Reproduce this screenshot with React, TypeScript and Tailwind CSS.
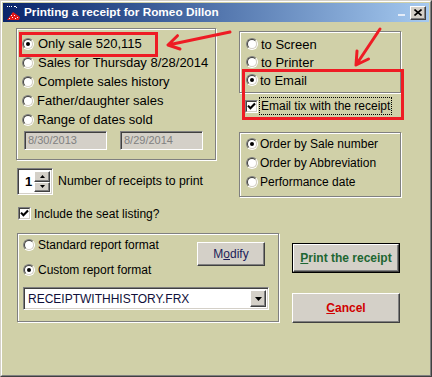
import React from "react";

const raised =
  "bg-[#d4d0c8] border border-t-white border-l-white border-b-[#404040] border-r-[#404040] shadow-[inset_-1px_-1px_0_#808080]";
const sunken =
  "border border-t-[#808080] border-l-[#808080] border-b-white border-r-white shadow-[inset_1px_1px_0_#404040,inset_-1px_-1px_0_#d4d0c8]";
const etched = "border border-[#808080] shadow-[inset_1px_1px_0_#fff,1px_1px_0_#fff]";

function Radio({ checked }: { checked?: boolean }) {
  return (
    <span className="relative block w-[12px] h-[12px] shrink-0 rounded-full border border-t-[#808080] border-l-[#808080] border-b-white border-r-white">
      <span className="absolute inset-0 rounded-full border border-t-[#404040] border-l-[#404040] border-b-[#d4d0c8] border-r-[#d4d0c8] bg-white flex items-center justify-center">
        {checked && <span className="block w-[4px] h-[4px] rounded-full bg-black" />}
      </span>
    </span>
  );
}

function Check() {
  return (
    <span className="relative block w-[13px] h-[13px] shrink-0 border border-t-[#808080] border-l-[#808080] border-b-white border-r-white">
      <span className="absolute inset-0 border border-t-[#404040] border-l-[#404040] border-b-[#d4d0c8] border-r-[#d4d0c8] bg-white">
        <svg width="9" height="9" viewBox="0 0 9 9" className="block">
          <path d="M1 3.6 L3.4 6.2 L8 1.4" stroke="#000" strokeWidth="2.1" fill="none" />
        </svg>
      </span>
    </span>
  );
}

function RadioRow({
  label,
  checked,
  h,
  text,
  gap,
}: {
  label: string;
  checked?: boolean;
  h: string;
  text: string;
  gap: string;
}) {
  return (
    <div className={`flex items-center ${h} ${gap}`}>
      <Radio checked={checked} />
      <span className={`${text} leading-none whitespace-nowrap`}>{label}</span>
    </div>
  );
}

export default function App() {
  return (
    <div className="relative w-[432px] h-[377px] bg-[#d0d0a8] border border-t-[#d4d0c8] border-l-[#d4d0c8] border-b-[#404040] border-r-[#404040] font-['Liberation_Sans',Arial,sans-serif] text-black overflow-hidden">
      <div className="h-full border border-t-white border-l-white border-b-[#808080] border-r-[#808080] p-[1px]">
        {/* Title bar */}
        <div className="h-[19px] flex items-center bg-gradient-to-r from-[#0a246a] to-[#a6caf0]">
          <svg width="16" height="16" viewBox="0 0 16 16" className="ml-[2px] shrink-0">
            <g fill="#fff">
              <rect x="2" y="1" width="1" height="1" />
              <rect x="4" y="1" width="1" height="1" />
              <rect x="6" y="1" width="1" height="1" />
              <rect x="9" y="1" width="2" height="1" />
              <rect x="11" y="2" width="1" height="1" />
            </g>
            <path d="M2 15 L8 7 L15 12 L14 15 Z" fill="#e21818" />
            <g fill="#fff">
              <rect x="6" y="10" width="1" height="1" />
              <rect x="9" y="10" width="1" height="1" />
              <rect x="4" y="13" width="1" height="1" />
              <rect x="7" y="12" width="1" height="1" />
              <rect x="10" y="13" width="1" height="1" />
              <rect x="12" y="12" width="1" height="1" />
            </g>
          </svg>
          <span className="ml-[3px] text-white font-bold text-[11.8px] leading-none whitespace-nowrap">
            Printing a receipt for Romeo Dillon
          </span>
          <div className="flex-1" />
          <div className="w-[7px] h-[2px] bg-[#e4ecf8] self-end mb-[6px] mr-[5px]" />
          <div className={`${raised} w-[16px] h-[14px] flex items-center justify-center mr-[3px]`}>
            <svg width="8" height="7" viewBox="0 0 8 7">
              <path d="M0.5 0.5 L7.5 6.5 M7.5 0.5 L0.5 6.5" stroke="#000" strokeWidth="1.6" />
            </svg>
          </div>
        </div>

        {/* Content */}
        <div className="pl-[13px]">
          <div className="flex items-start">
            {/* Left column */}
            <div className="w-[200px] flex flex-col">
              <div className={`${etched} mt-[6px] h-[132px] pt-[5px] pl-[5px]`}>
                <RadioRow label="Only sale 520,115" checked h="h-[19px]" text="text-[13px]" gap="gap-[4px]" />
                <RadioRow label="Sales for Thursday 8/28/2014" h="h-[19px]" text="text-[13px]" gap="gap-[4px]" />
                <RadioRow label="Complete sales history" h="h-[19px]" text="text-[13px]" gap="gap-[4px]" />
                <RadioRow label="Father/daughter sales" h="h-[19px]" text="text-[13px]" gap="gap-[3px]" />
                <RadioRow label="Range of dates sold" h="h-[19px]" text="text-[13px]" gap="gap-[3px]" />
                <div className="flex mt-[2px] ml-[2px] gap-[13px]">
                  <div className={`${sunken} bg-[#d4d0c8] w-[83px] h-[19px] flex items-center pl-[3px] text-[11px] text-[#808080] leading-none`}>
                    8/30/2013
                  </div>
                  <div className={`${sunken} bg-[#d4d0c8] w-[83px] h-[19px] flex items-center pl-[3px] text-[11px] text-[#808080] leading-none`}>
                    8/29/2014
                  </div>
                </div>
              </div>
              <div className="flex items-center mt-[8px] ml-[1px]">
                <div className={`${sunken} bg-white w-[36px] h-[27px] flex p-[2px]`}>
                  <div className="flex-1 flex items-center pl-[5px] text-[13px] font-bold leading-none">1</div>
                  <div className="w-[16px] flex flex-col">
                    <div className={`${raised} flex-1 flex items-center justify-center`}>
                      <svg width="5" height="3" viewBox="0 0 5 3">
                        <path d="M2.5 0 L5 3 L0 3 Z" fill="#000" />
                      </svg>
                    </div>
                    <div className={`${raised} flex-1 flex items-center justify-center`}>
                      <svg width="5" height="3" viewBox="0 0 5 3">
                        <path d="M0 0 L5 0 L2.5 3 Z" fill="#000" />
                      </svg>
                    </div>
                  </div>
                </div>
                <span className="ml-[5px] text-[12.3px] leading-none whitespace-nowrap">Number of receipts to print</span>
              </div>
            </div>

            {/* Right column */}
            <div className="ml-[23px] w-[162px] flex flex-col">
              <div className={`${etched} mt-[9px] h-[62px] pt-[3px] pl-[6px]`}>
                <RadioRow label="to Screen" h="h-[18px]" text="text-[13px]" gap="gap-[3px]" />
                <RadioRow label="to Printer" h="h-[18px]" text="text-[13px]" gap="gap-[3px]" />
                <RadioRow label="to Email" checked h="h-[18px]" text="text-[13px]" gap="gap-[2px]" />
              </div>
              <div className="flex items-center h-[18px] mt-[4px] ml-[6px]">
                <Check />
                <span className="ml-[1px] px-[1px] h-[18px] flex items-center border border-dotted border-black text-[12px] leading-none whitespace-nowrap">
                  Email tix with the receipt
                </span>
              </div>
              <div className={`${etched} mt-[17px] h-[65px] pt-[1px] pl-[6px]`}>
                <RadioRow label="Order by Sale number" checked h="h-[19px]" text="text-[12px]" gap="gap-[2px]" />
                <RadioRow label="Order by Abbreviation" h="h-[19px]" text="text-[12px]" gap="gap-[2px]" />
                <RadioRow label="Performance date" h="h-[19px]" text="text-[12px]" gap="gap-[2px]" />
              </div>
            </div>
          </div>

          {/* Include seat listing */}
          <div className="flex items-center mt-[10px] ml-[2px] h-[13px]">
            <Check />
            <span className="ml-[3px] text-[12px] leading-none whitespace-nowrap">Include the seat listing?</span>
          </div>

          {/* Bottom row */}
          <div className="flex items-start mt-[13px] ml-[1px]">
            <div className={`${etched} w-[262px] h-[89px] pt-[2px] pl-[5px] pr-[13px]`}>
              <div className="flex justify-between">
                <div className="flex flex-col">
                  <RadioRow label="Standard report format" h="h-[18px]" text="text-[12px]" gap="gap-[3px]" />
                  <div className="mt-[7px]">
                    <RadioRow label="Custom report format" checked h="h-[18px]" text="text-[12px]" gap="gap-[3px]" />
                  </div>
                </div>
                <div className={`${raised} mt-[6px] w-[68px] h-[24px] flex items-center justify-center text-[12px] text-[#1c1c58] leading-none`}>
                  M<span className="underline">o</span>dify
                </div>
              </div>
              <div className={`${sunken} bg-white mt-[8px] w-[246px] h-[23px] flex p-[2px]`}>
                <div className="flex-1 flex items-center pl-[2px] text-[12px] text-[#10103a] leading-none whitespace-nowrap">
                  RECEIPTWITHHISTORY.FRX
                </div>
                <div className={`${raised} w-[16px] flex items-center justify-center`}>
                  <svg width="7" height="4" viewBox="0 0 7 4">
                    <path d="M0 0 L7 0 L3.5 4 Z" fill="#000" />
                  </svg>
                </div>
              </div>
            </div>

            <div className="ml-[13px] mt-[10px] flex flex-col">
              <div className="border border-black w-[108px] h-[30px] flex">
                <div className={`${raised} flex-1 flex items-center justify-center text-[12px] font-bold text-[#1d6632] leading-none`}>
                  <span className="underline">P</span>rint the receipt
                </div>
              </div>
              <div className={`${raised} mt-[20px] w-[108px] h-[30px] flex items-center justify-center text-[12px] font-bold text-[#d00000] leading-none`}>
                <span className="underline">C</span>ancel
              </div>
            </div>
          </div>
        </div>
      </div>

      {/* Annotations */}
      <div className="absolute left-[18px] top-[31px] w-[139px] h-[25px] border-[3px] border-[#ee1c24] pointer-events-none" />
      <div className="absolute left-[241px] top-[68px] w-[162px] h-[51px] border-[3px] border-[#ee1c24] pointer-events-none" />
      <svg className="absolute left-0 top-0 pointer-events-none" width="432" height="377">
        <g stroke="#ee1c24" strokeWidth="3" strokeLinecap="round" strokeLinejoin="round" fill="none">
          <path d="M229 31 L167 44 M176.5 34.7 L167 44 L179 48" />
          <path d="M379 28 L355 64 M356 50 L355 64 L367.5 58" />
        </g>
      </svg>
    </div>
  );
}
